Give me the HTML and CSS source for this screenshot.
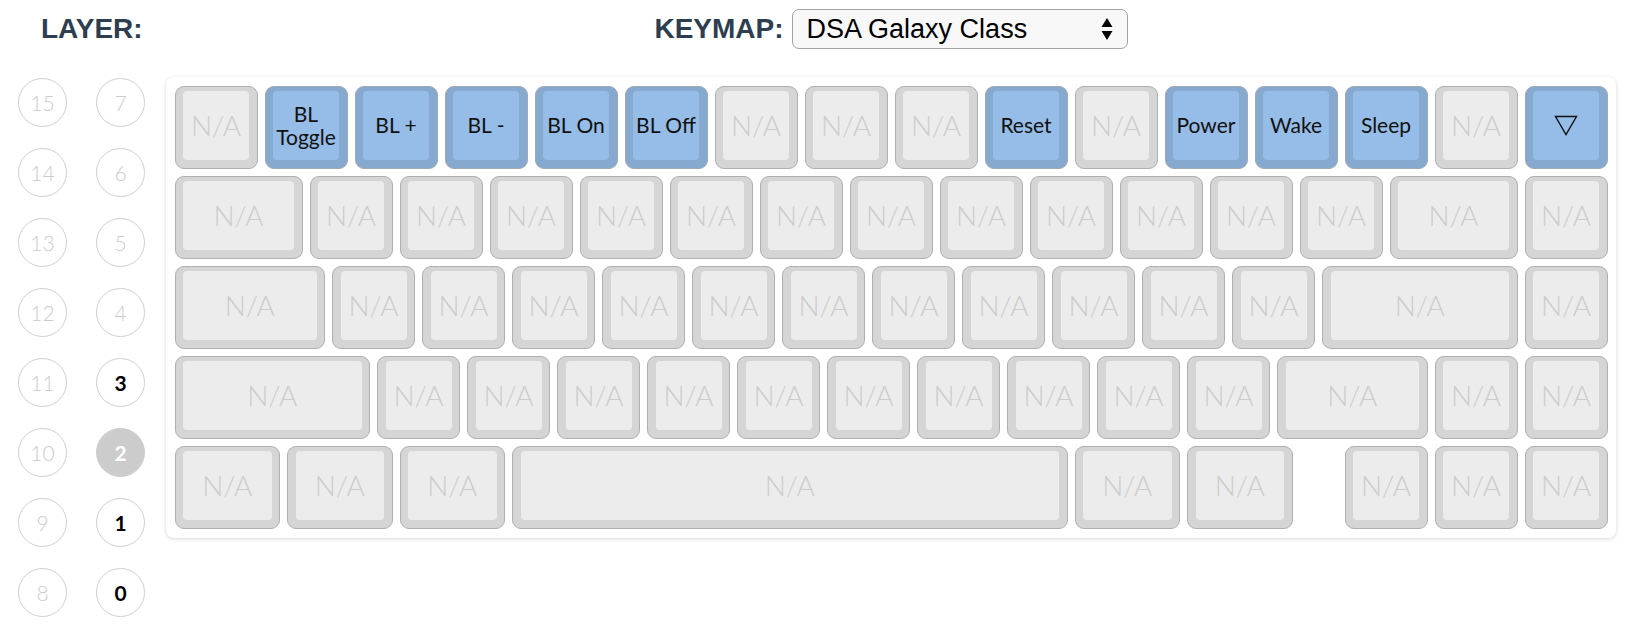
FILE: index.html
```html
<!DOCTYPE html>
<html>
<head>
<meta charset="utf-8">
<link rel="stylesheet" href="styles.css">
</head>
<body>
<div class="header">
  <div class="side"><span class="label">LAYER:</span></div>
  <div class="keymap-area">
    <span class="label">KEYMAP:</span>
    <div class="select-wrap">
      <select class="select"><option>DSA Galaxy Class</option></select>
      <svg class="select-arrows" width="12" height="24" viewBox="0 0 12 24"><polygon points="6,1 11.5,10 0.5,10" fill="#000"/><polygon points="0.5,14 11.5,14 6,23" fill="#000"/></svg>
    </div>
  </div>
</div>
<div class="main">
  <div class="layers">
    <div class="lc off">15</div><div class="lc off">7</div>
    <div class="lc off">14</div><div class="lc off">6</div>
    <div class="lc off">13</div><div class="lc off">5</div>
    <div class="lc off">12</div><div class="lc off">4</div>
    <div class="lc off">11</div><div class="lc on">3</div>
    <div class="lc off">10</div><div class="lc active">2</div>
    <div class="lc off">9</div><div class="lc on">1</div>
    <div class="lc off">8</div><div class="lc on">0</div>
  </div>
  <div class="board">
    <div class="row">
      <div class="key u1"><div class="face">N/A</div></div>
      <div class="key u1 blue"><div class="face">BL<br>Toggle</div></div>
      <div class="key u1 blue"><div class="face">BL +</div></div>
      <div class="key u1 blue"><div class="face">BL -</div></div>
      <div class="key u1 blue"><div class="face">BL On</div></div>
      <div class="key u1 blue"><div class="face">BL Off</div></div>
      <div class="key u1"><div class="face">N/A</div></div>
      <div class="key u1"><div class="face">N/A</div></div>
      <div class="key u1"><div class="face">N/A</div></div>
      <div class="key u1 blue"><div class="face">Reset</div></div>
      <div class="key u1"><div class="face">N/A</div></div>
      <div class="key u1 blue"><div class="face">Power</div></div>
      <div class="key u1 blue"><div class="face">Wake</div></div>
      <div class="key u1 blue"><div class="face">Sleep</div></div>
      <div class="key u1"><div class="face">N/A</div></div>
      <div class="key u1 blue"><div class="face"><svg width="24" height="21" viewBox="0 0 24 21"><polygon points="1.5,1.5 22.5,1.5 12,19.5" fill="none" stroke="#111" stroke-width="1.4"/></svg></div></div>
    </div>
    <div class="row">
      <div class="key u15"><div class="face">N/A</div></div>
      <div class="key u1"><div class="face">N/A</div></div>
      <div class="key u1"><div class="face">N/A</div></div>
      <div class="key u1"><div class="face">N/A</div></div>
      <div class="key u1"><div class="face">N/A</div></div>
      <div class="key u1"><div class="face">N/A</div></div>
      <div class="key u1"><div class="face">N/A</div></div>
      <div class="key u1"><div class="face">N/A</div></div>
      <div class="key u1"><div class="face">N/A</div></div>
      <div class="key u1"><div class="face">N/A</div></div>
      <div class="key u1"><div class="face">N/A</div></div>
      <div class="key u1"><div class="face">N/A</div></div>
      <div class="key u1"><div class="face">N/A</div></div>
      <div class="key u15"><div class="face">N/A</div></div>
      <div class="key u1"><div class="face">N/A</div></div>
    </div>
    <div class="row">
      <div class="key u175"><div class="face">N/A</div></div>
      <div class="key u1"><div class="face">N/A</div></div>
      <div class="key u1"><div class="face">N/A</div></div>
      <div class="key u1"><div class="face">N/A</div></div>
      <div class="key u1"><div class="face">N/A</div></div>
      <div class="key u1"><div class="face">N/A</div></div>
      <div class="key u1"><div class="face">N/A</div></div>
      <div class="key u1"><div class="face">N/A</div></div>
      <div class="key u1"><div class="face">N/A</div></div>
      <div class="key u1"><div class="face">N/A</div></div>
      <div class="key u1"><div class="face">N/A</div></div>
      <div class="key u1"><div class="face">N/A</div></div>
      <div class="key u225"><div class="face">N/A</div></div>
      <div class="key u1"><div class="face">N/A</div></div>
    </div>
    <div class="row">
      <div class="key u225"><div class="face">N/A</div></div>
      <div class="key u1"><div class="face">N/A</div></div>
      <div class="key u1"><div class="face">N/A</div></div>
      <div class="key u1"><div class="face">N/A</div></div>
      <div class="key u1"><div class="face">N/A</div></div>
      <div class="key u1"><div class="face">N/A</div></div>
      <div class="key u1"><div class="face">N/A</div></div>
      <div class="key u1"><div class="face">N/A</div></div>
      <div class="key u1"><div class="face">N/A</div></div>
      <div class="key u1"><div class="face">N/A</div></div>
      <div class="key u1"><div class="face">N/A</div></div>
      <div class="key u175"><div class="face">N/A</div></div>
      <div class="key u1"><div class="face">N/A</div></div>
      <div class="key u1"><div class="face">N/A</div></div>
    </div>
    <div class="row">
      <div class="key u125"><div class="face">N/A</div></div>
      <div class="key u125"><div class="face">N/A</div></div>
      <div class="key u125"><div class="face">N/A</div></div>
      <div class="key u625"><div class="face">N/A</div></div>
      <div class="key u125"><div class="face">N/A</div></div>
      <div class="key u125"><div class="face">N/A</div></div>
      <div class="spacer"></div>
      <div class="key u1"><div class="face">N/A</div></div>
      <div class="key u1"><div class="face">N/A</div></div>
      <div class="key u1"><div class="face">N/A</div></div>
    </div>
  </div>
</div>
</body>
</html>
```
FILE: styles.css
```css
* { box-sizing: border-box; }
body {
  margin: 0;
  background: #fff;
  font-family: "Lato", "Liberation Sans", sans-serif;
}
.header {
  display: flex;
  align-items: center;
  padding-top: 9px;
  height: 49px;
}
.side {
  width: 166px;
  padding-left: 41px;
}
.label {
  font-family: "Liberation Sans", Arial, sans-serif;
  font-weight: bold;
  font-size: 28px;
  color: #2c3e50;
}
.keymap-area {
  width: 1450px;
  display: flex;
  justify-content: center;
  align-items: center;
  gap: 8px;
}
.select-wrap {
  position: relative;
  width: 336px;
  height: 40px;
}
.select {
  appearance: none;
  -webkit-appearance: none;
  width: 100%;
  height: 100%;
  border: 1.5px solid #a3a3a3;
  border-radius: 7px;
  background: #f8f8f8;
  padding: 0 14px;
  font-family: "Liberation Sans", Arial, sans-serif;
  font-size: 27px;
  color: #000;
}
.select-arrows {
  position: absolute;
  right: 15px;
  top: 8px;
}
.main {
  display: flex;
  margin-top: 28px;
}
.layers {
  width: 166px;
  padding-left: 18px;
  padding-top: 1px;
  display: grid;
  grid-template-columns: 49px 49px;
  column-gap: 29px;
  row-gap: 21px;
  align-content: start;
}
.lc {
  width: 49px;
  height: 49px;
  border-radius: 50%;
  border: 1.5px solid #cfcfcf;
  display: flex;
  align-items: center;
  justify-content: center;
  font-size: 21px;
}
.lc.off {
  color: #cccccc;
  font-weight: 300;
}
.lc.on {
  color: #000;
  font-weight: 700;
}
.lc.active {
  background: #cccccc;
  border-color: #cccccc;
  color: #fff;
  font-weight: 700;
}
.board {
  width: 1450px;
  height: 461px;
  background: #fff;
  border-radius: 8px;
  box-shadow: 0 1px 4px rgba(0,0,0,0.16);
  padding: 9px 8.5px;
  display: flex;
  flex-direction: column;
  gap: 7px;
}
.row {
  display: flex;
  gap: 7px;
  height: 83px;
}
.key {
  height: 83px;
  border: 1.5px solid #afafaf;
  border-radius: 9px;
  background: #d5d5d5;
  padding: 4px 7.5px 8px 7.5px;
  flex: none;
}
.face {
  height: 100%;
  background: #ececec;
  border-radius: 4px;
  display: flex;
  align-items: center;
  justify-content: center;
  text-align: center;
  color: #cccccc;
  font-size: 28px;
  font-weight: 300;
  line-height: 1.05;
}
.key.blue {
  background: #86a9cf;
  border-color: #a0a8b2;
}
.key.blue .face {
  background: #95bde7;
  color: #111;
  font-size: 21px;
  font-weight: 400;
}
.u1 { width: 83px; }
.u125 { width: 105.5px; }
.u15 { width: 128px; }
.u175 { width: 150.5px; }
.u225 { width: 195.5px; }
.u625 { width: 555.5px; }
.spacer { width: 38px; flex: none; }
```
